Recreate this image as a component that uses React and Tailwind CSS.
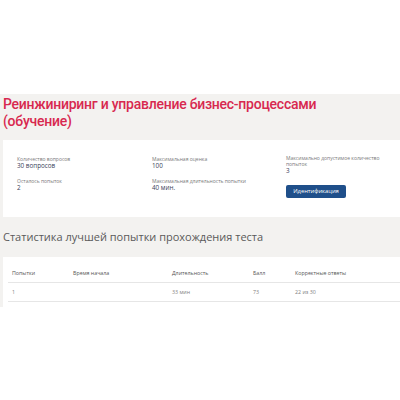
import React from "react";

const info = [
  { label: "Количество вопросов", value: "30 вопросов" },
  { label: "Максимальная оценка", value: "100" },
  { label: "Максимально допустимое количество попыток", value: "3" },
];

const cols = [
  { title: "Попытки", value: "1", w: "w-[61px]" },
  { title: "Время начала", value: "", w: "w-[99px]" },
  { title: "Длительность", value: "33 мин", w: "w-[81px]" },
  { title: "Балл", value: "73", w: "w-[42px]" },
  { title: "Корректные ответы", value: "22 из 30", w: "flex-1" },
];

function Field({ label, value }) {
  return (
    <div className="flex flex-col">
      <span className="text-[5px] leading-[6px] text-[#7a7a7a] max-w-[96px]">{label}</span>
      <span className="text-[6.3px] leading-[8px] text-[#3a4358]">{value}</span>
    </div>
  );
}

export default function App() {
  return (
    <div className="w-[400px] h-[400px] bg-white font-['Open_Sans',sans-serif] overflow-hidden">
      <div className="h-[94px]" />
      <div className="bg-[#f3f2f0] pl-[3px] pb-0">
        <h1 className="pt-[2px] whitespace-nowrap font-['Roboto',sans-serif] text-[14px] leading-[17px] font-medium text-[#d8284f] tracking-[-0.25px]">
          Реинжиниринг и управление бизнес-процессами
          <br />
          (обучение)
        </h1>

        {/* сводка по тесту */}
        <div className="mt-[10px] h-[77px] bg-white pl-[14px] pt-[16px]">
          <div className="grid grid-cols-[135px_134px_1fr]">
            <div className="h-[22px]"><Field {...info[0]} /></div>
            <div className="h-[22px]"><Field {...info[1]} /></div>
            <div className="h-[22px] -mt-[1px]"><Field {...info[2]} /></div>
            <Field label="Осталось попыток" value="2" />
            <Field label="Максимальная длительность попытки" value="40 мин." />
            <div className="flex pt-[7px]">
              <button className="block h-[13px] w-[60px] rounded-[2px] bg-[#1f4f8a] text-[5.8px] leading-[13px] text-white">
                Идентификация
              </button>
            </div>
          </div>
        </div>

        <h2 className="mt-[13px] text-[11px] leading-[14px] text-[#5a5a5a]">
          Статистика лучшей попытки прохождения теста
        </h2>

        <div className="mt-[13px] h-[50px] bg-white pl-[5px]">
          <div className="flex h-[26px] items-end border-b border-[#e6e6e6] pb-[5px]">
            {cols.map((c) => (
              <div key={c.title} className={`${c.w} pl-[4px] text-[5.3px] leading-[7px] text-[#555555]`}>
                {c.title}
              </div>
            ))}
          </div>
          <div className="flex h-[19px] items-center border-b border-[#e6e6e6]">
            {cols.map((c) => (
              <div key={c.title} className={`${c.w} pl-[4px] text-[5.3px] leading-[7px] text-[#808080]`}>
                {c.value}
              </div>
            ))}
          </div>
        </div>
      </div>
    </div>
  );
}
